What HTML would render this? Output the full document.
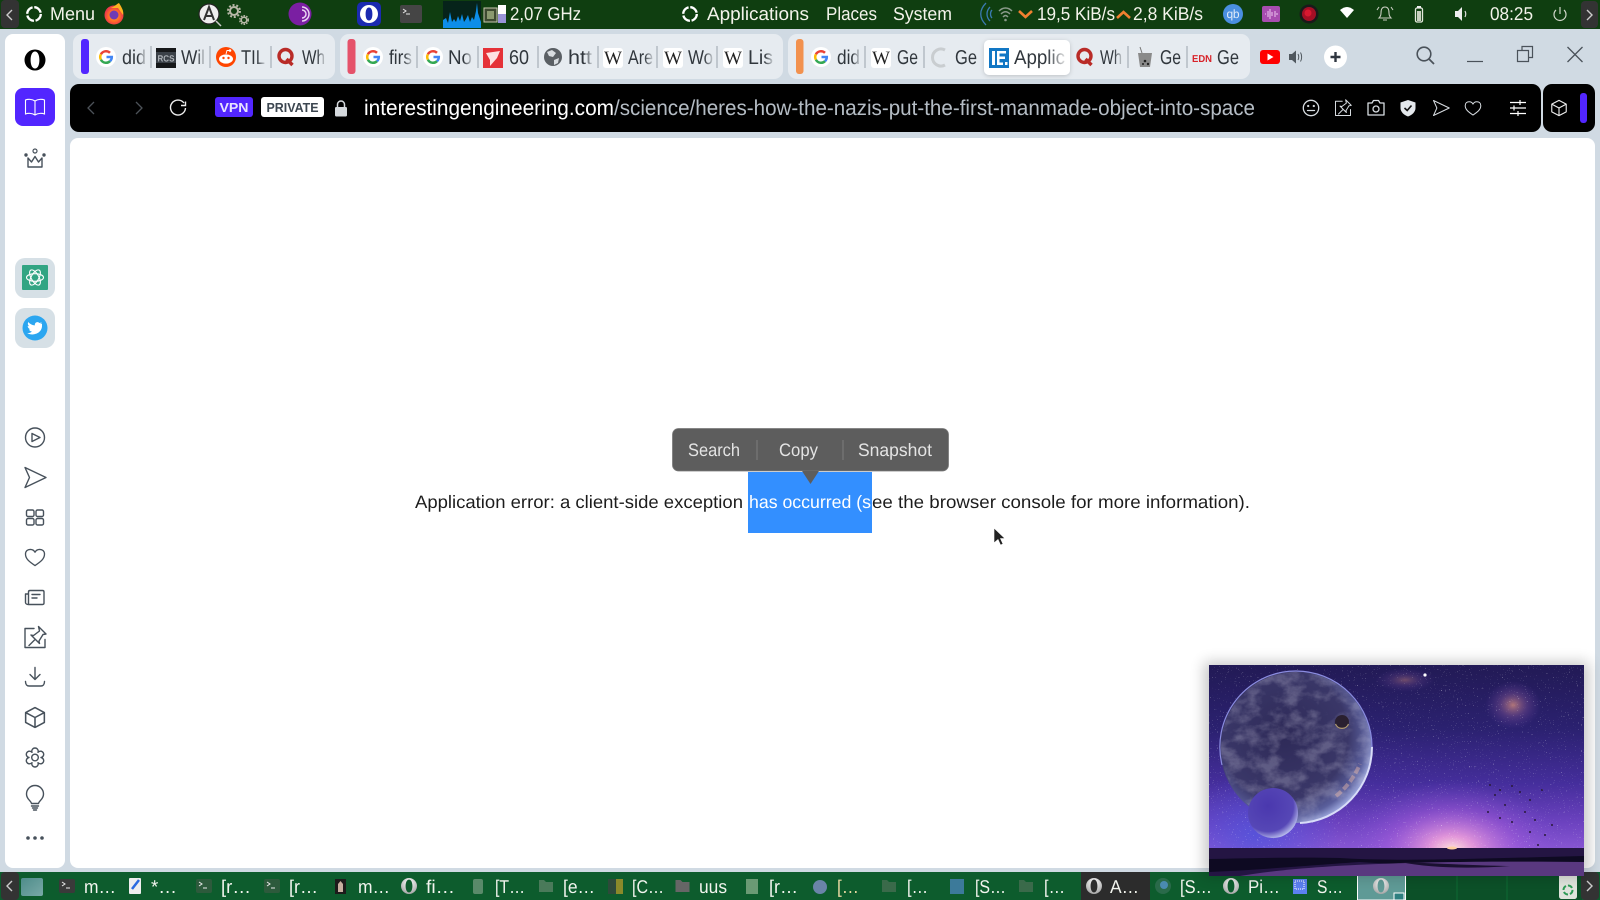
<!DOCTYPE html>
<html lang="en">
<head>
<meta charset="utf-8">
<title>Application error</title>
<style>
html,body{margin:0;padding:0;width:1600px;height:900px;overflow:hidden;background:#d0dae3}
svg{display:block;position:absolute;left:0;top:0}
text{font-family:"Liberation Sans",sans-serif;text-rendering:geometricPrecision}
.top{font-size:18.5px;fill:#f3f3ea}
.tab{font-size:20px}
.task{font-size:18.5px;fill:#f2f4ee}
.ic{fill:none;stroke:#47515b;stroke-width:1.4;stroke-linejoin:round;stroke-linecap:round}
.tb{fill:none;stroke:#d8dde2;stroke-width:1.3;stroke-linejoin:round;stroke-linecap:round}
.sep{stroke:#9aa3ab;stroke-width:1}
.ser{font-family:"Liberation Serif",serif;font-size:19px;fill:#222}
</style>
</head>
<body>
<svg width="1600" height="900" viewBox="0 0 1600 900" xmlns="http://www.w3.org/2000/svg">
<defs>
<linearGradient id="fd"><stop offset="0" stop-color="#30363c"/><stop offset=".65" stop-color="#30363c"/><stop offset="1" stop-color="#30363c" stop-opacity=".15"/></linearGradient>
<linearGradient id="sky" x1="0" y1="0" x2="0" y2="1"><stop offset="0" stop-color="#221a55"/><stop offset=".35" stop-color="#2b2170"/><stop offset=".65" stop-color="#452e9c"/><stop offset=".86" stop-color="#6c42bf"/><stop offset="1" stop-color="#8655d2"/></linearGradient>
<radialGradient id="sun" cx=".5" cy=".5" r=".5"><stop offset="0" stop-color="#ffe6dc"/><stop offset=".2" stop-color="#f3a2dc" stop-opacity=".85"/><stop offset=".6" stop-color="#b060e0" stop-opacity=".4"/><stop offset="1" stop-color="#8050d8" stop-opacity="0"/></radialGradient>
<radialGradient id="blu" cx=".5" cy=".5" r=".5"><stop offset="0" stop-color="#4a55e0" stop-opacity=".7"/><stop offset="1" stop-color="#4a55e0" stop-opacity="0"/></radialGradient>
<radialGradient id="neb" cx=".5" cy=".5" r=".5"><stop offset="0" stop-color="#c8847c" stop-opacity=".85"/><stop offset=".5" stop-color="#7a5090" stop-opacity=".45"/><stop offset="1" stop-color="#5a3a9a" stop-opacity="0"/></radialGradient>
<radialGradient id="pl" cx=".42" cy=".42" r=".62"><stop offset="0" stop-color="#2e2a58"/><stop offset=".68" stop-color="#3a3768"/><stop offset=".88" stop-color="#5a5f9c"/><stop offset="1" stop-color="#aab6ea"/></radialGradient>
<radialGradient id="mo" cx=".4" cy=".36" r=".68"><stop offset="0" stop-color="#4a38ae"/><stop offset=".75" stop-color="#5647b6"/><stop offset="1" stop-color="#c0c6f0"/></radialGradient>
<radialGradient id="ff" cx=".5" cy=".55" r=".5"><stop offset="0" stop-color="#ffb020"/><stop offset=".6" stop-color="#ff6a28"/><stop offset="1" stop-color="#e8344e"/></radialGradient>
<radialGradient id="opg" cx=".5" cy=".3" r=".8"><stop offset="0" stop-color="#fff"/><stop offset="1" stop-color="#999"/></radialGradient>
<linearGradient id="sd" x1="0" y1="0" x2="1" y2="1"><stop offset="0" stop-color="#4e8c8a"/><stop offset="1" stop-color="#79a9a7"/></linearGradient>
<clipPath id="pipc"><rect x="1209" y="665" width="375" height="211"/></clipPath>
<clipPath id="plc"><circle cx="1296" cy="747" r="75"/></clipPath>
<filter id="stars" x="0" y="0" width="100%" height="100%"><feTurbulence type="fractalNoise" baseFrequency=".75" numOctaves="2" seed="4"/><feColorMatrix values="0 0 0 0 1 0 0 0 0 1 0 0 0 0 1 0 0 0 10 -7.2"/></filter>
<filter id="cl" x="0" y="0" width="100%" height="100%"><feTurbulence type="fractalNoise" baseFrequency=".05 .07" numOctaves="5" seed="7"/><feColorMatrix values="0 0 0 0 .62 0 0 0 0 .6 0 0 0 0 .74 0 0 0 3 -1.2"/></filter>
<filter id="sh" x="-10%" y="-10%" width="120%" height="120%"><feGaussianBlur stdDeviation="7"/></filter>
<filter id="sh2" x="-10%" y="-30%" width="120%" height="170%"><feDropShadow dx="0" dy="1" stdDeviation="2" flood-color="#000" flood-opacity=".18"/></filter>

<g id="g"><circle r="10" fill="#fff"/><g fill="none" stroke-width="2.5"><path d="M4 -4.2A5.8 5.8 0 0 0 -5.1 -2.7" stroke="#ea4335"/><path d="M-5.1 -2.7A5.8 5.8 0 0 0 -5.1 2.7" stroke="#fbbc05"/><path d="M-5.1 2.7A5.8 5.8 0 0 0 4 4.2" stroke="#34a853"/><path d="M4 4.2A5.8 5.8 0 0 0 5.8 0H.5" stroke="#4285f4"/></g></g>
<g id="w"><rect x="-10" y="-10" width="20" height="20" rx="3" fill="#fff"/><text class="ser" x="0" y="6" text-anchor="middle" textLength="18" lengthAdjust="spacingAndGlyphs">W</text></g>
<g id="q"><circle r="6.5" fill="none" stroke="#b92b27" stroke-width="3.4"/><path d="M1 3L7 9" stroke="#b92b27" stroke-width="3.4"/></g>
<g id="op"><path fill="url(#opg)" fill-rule="evenodd" d="M0 -8A8 8 0 1 1 0 8A8 8 0 1 1 0 -8ZM0 -6.4C-2.2 -6.4 -3.4 -3.4 -3.4 0C-3.4 3.4 -2.2 6.4 0 6.4C2.2 6.4 3.4 3.4 3.4 0C3.4 -3.4 2.2 -6.4 0 -6.4Z"/></g>
<g id="term"><rect x="-8" y="-7" width="16" height="14" rx="2"/><path d="M-5 -4L-2 -2L-5 0M-1 2H3" fill="none" stroke="#e8e8e8" stroke-width="1"/></g>
<g id="fold"><path d="M-7 -6H-2L0 -4H7V6H-7Z"/></g>
<path id="cube" d="M0 -9L8.5 -4.5V4.5L0 9L-8.5 4.5V-4.5ZM-8.5 -4.5L0 0L8.5 -4.5M0 0V9"/>
<path id="heart" d="M0 9C-6 5 -10 2 -10 -3C-10 -6.5 -7.5 -8 -5 -8C-3 -8 -1 -7 0 -5C1 -7 3 -8 5 -8C7.5 -8 10 -6.5 10 -3C10 2 6 5 0 9Z"/>
<path id="send" d="M-10 -10L11 0L-10 10L-5.5 0Z"/>
<path id="pin" d="M-1 -9H-10V10H10V2M3.5 -11L11 -3.5L8 -3L4 3.5L4.5 6L-4 -2.5L-1.5 -2L4.5 -6.5ZM0 2L-6 8"/>
</defs>

<!-- backgrounds -->
<rect width="1600" height="900" fill="#d0dae3"/>
<rect width="1600" height="29" fill="#0f3e10"/>
<rect y="872" width="1600" height="28" fill="#0d5c2d"/>
<rect x="1407" y="872" width="175" height="28" fill="#0c5028"/>
<path d="M1457 872V900M1507 872V900" stroke="#0e6a33" stroke-width="1"/>

<!-- top panel -->
<rect x="1" y="0" width="18" height="28" rx="4" fill="#333"/>
<path d="M12 10L7 15L12 20" fill="none" stroke="#ccc" stroke-width="1.4"/>
<circle cx="34" cy="14" r="6.8" fill="none" stroke="#fff" stroke-width="2.3" stroke-dasharray="9 1.7"/>
<circle cx="114" cy="15" r="9.5" fill="url(#ff)"/><circle cx="114" cy="15" r="4.5" fill="#6e3bb5"/><path d="M108 8C112 9 118 3 119 3C122 8 124 11 123 15L118 8Z" fill="#ffb020"/>
<text class="top" x="50" y="20" textLength="45" lengthAdjust="spacingAndGlyphs">Menu</text>
<circle cx="209" cy="14" r="10" fill="#eee" stroke="#222" stroke-width="1.2"/><path d="M204 20L209 7L214 20M206 16H212" fill="none" stroke="#333" stroke-width="2"/><path d="M216 21L221 26" stroke="#ccc" stroke-width="1.5"/>
<g fill="none" stroke="#b8b8a8"><circle cx="234" cy="11" r="4" stroke-width="2"/><circle cx="234" cy="11" r="6" stroke-width="2" stroke-dasharray="2 1.8"/><circle cx="244" cy="20" r="2.8" stroke-width="1.6"/><circle cx="244" cy="20" r="4.3" stroke-width="1.4" stroke-dasharray="1.6 1.2"/></g>
<circle cx="300" cy="14" r="11.5" fill="#7a1fa2"/><path d="M302 7A7 7 0 0 1 302 21M302 10A4 4 0 0 1 302 18" fill="none" stroke="#e9d5f2" stroke-width="1.5"/>
<rect x="357" y="2" width="24" height="24" rx="5" fill="#1b2ab0"/><path fill="#fff" fill-rule="evenodd" d="M369 5A9 9 0 1 1 369 23A9 9 0 1 1 369 5ZM369 7.5C366.6 7.5 365.6 10.5 365.6 14C365.6 17.5 366.6 20.5 369 20.5C371.4 20.5 372.4 17.5 372.4 14C372.4 10.5 371.4 7.5 369 7.5Z"/>
<rect x="400" y="5" width="22" height="18" rx="2" fill="#454545"/><path d="M403 9L406 11L403 13M406 14H410" fill="none" stroke="#e8e8e8"/>
<rect x="443" y="1" width="38" height="27" fill="#06231a"/>
<path d="M443 25V20L446 18L448 23L450 12L452 22L454 19L456 22L458 16L460 21L462 14L464 22L466 19L468 15L470 22L472 17L474 20L476 11L477 3L478 13L481 22V28H443Z" fill="#0d8ee8"/>
<rect x="484" y="8" width="13" height="14" fill="#3c4a30" stroke="#c8c8b0"/><rect x="487" y="11" width="7" height="8" fill="#8a9a70"/>
<rect x="498" y="5" width="8" height="9" fill="#fff"/><rect x="498" y="14" width="8" height="9" fill="#9a94d8"/>
<text class="top" x="510" y="20" textLength="71" lengthAdjust="spacingAndGlyphs">2,07 GHz</text>
<circle cx="690" cy="14" r="6.8" fill="none" stroke="#fff" stroke-width="2.3" stroke-dasharray="9 1.7"/>
<text class="top" x="707" y="20" textLength="102" lengthAdjust="spacingAndGlyphs">Applications</text>
<text class="top" x="826" y="20" textLength="51" lengthAdjust="spacingAndGlyphs">Places</text>
<text class="top" x="893" y="20" textLength="59" lengthAdjust="spacingAndGlyphs">System</text>
<path d="M986 3C979 10 979 18 986 25M990 7C986 11 986 17 990 21M992 10C990 12 990 16 992 18" fill="none" stroke="#3a7ab0" stroke-width="1.3"/>
<path d="M999 11C1003 7 1008 7 1012 11M1001 14C1004 11 1007 11 1010 14M1003 17C1005 15 1006 15 1008 17" fill="none" stroke="#8a9a8a" stroke-width="1.5"/><circle cx="1005.5" cy="20" r="1.3" fill="#8a9a8a"/>
<path d="M1019 11L1025.5 17L1032 11" fill="none" stroke="#f08030" stroke-width="2.6"/>
<text class="top" x="1037" y="20" textLength="78" lengthAdjust="spacingAndGlyphs">19,5 KiB/s</text>
<path d="M1117 18L1123.5 12L1130 18" fill="none" stroke="#f08030" stroke-width="2.6"/>
<text class="top" x="1133" y="20" textLength="70" lengthAdjust="spacingAndGlyphs">2,8 KiB/s</text>
<circle cx="1233" cy="14" r="10" fill="#4a8fe0"/><text x="1233" y="18" text-anchor="middle" style="font-size:12px;fill:#dfeaf8" textLength="13">qb</text>
<rect x="1262" y="6" width="18" height="16" rx="2" fill="#a84db0"/><path d="M1265 14H1266M1268 11V17M1270 9V19M1272 12V16M1275 11V17M1277 13V15" stroke="#eec8f0"/>
<circle cx="1309" cy="14" r="9.5" fill="#1a1a1a"/><circle cx="1309" cy="14" r="7" fill="#a50f25"/><circle cx="1308" cy="13" r="3.5" fill="#d81830"/>
<path d="M1340 10C1345 6 1349 6 1354 10L1347 18Z" fill="#fff"/>
<path d="M1385 7C1382 7 1381 10 1381 13C1381 16 1380 17 1379 18H1391C1390 17 1389 16 1389 13C1389 10 1388 7 1385 7ZM1383 20H1387M1379 7L1377 10M1391 7L1393 10" fill="none" stroke="#c8ccc0" stroke-width="1.1"/>
<rect x="1415.500" y="8" width="7" height="14" rx="1.5" fill="#0f3e10" stroke="#e4e8dc" stroke-width="1.3"/><rect x="1417" y="11" width="4" height="10" fill="#c8d0c0"/><rect x="1417" y="6" width="4" height="2" fill="#eee"/>
<path d="M1455 11H1458L1462 7V21L1458 17H1455Z" fill="#eee"/><path d="M1465 11C1466 13 1466 15 1465 17" fill="none" stroke="#ddd" stroke-width="1.2"/>
<text class="top" x="1490" y="20" textLength="43" lengthAdjust="spacingAndGlyphs">08:25</text>
<path d="M1556 10A6 6 0 1 0 1564 10M1560 7V14" fill="none" stroke="#cfd5c8" stroke-width="1.2"/>
<rect x="1581" y="1" width="17" height="27" rx="4" fill="#333"/><path d="M1587 10L1592 15L1587 20" fill="none" stroke="#ccc" stroke-width="1.4"/>

<!-- sidebar -->
<rect x="5" y="34" width="60" height="834" rx="8" fill="#fff"/>
<path fill="#000" fill-rule="evenodd" d="M35 49.5A10.5 10.5 0 1 1 35 70.5A10.5 10.5 0 1 1 35 49.5ZM35 51.5C32 51.5 30.6 55.5 30.6 60C30.6 64.5 32 68.5 35 68.5C38 68.5 39.4 64.5 39.4 60C39.4 55.5 38 51.5 35 51.5Z"/>
<rect x="15" y="88" width="40" height="38" rx="8" fill="#5226ff"/>
<path d="M35 101C32 99 28 99 25.5 100V114C28 113 32 113 35 115C38 113 42 113 44.500 114V100C42 99 38 99 35 101ZM35 101V115" fill="none" stroke="#fff" stroke-width="1.1"/>
<path d="M28 158L31.5 162L35 156.5L38.5 162L42 158V167H28Z" fill="none" stroke="#47515b" stroke-width="1.4" stroke-linejoin="round"/><circle cx="26" cy="155" r="1.7" fill="#47515b"/><circle cx="35" cy="151" r="2" fill="none" stroke="#47515b" stroke-width="1.2"/><circle cx="44" cy="155" r="1.7" fill="#47515b"/>
<rect x="15" y="258" width="40" height="40" rx="10" fill="#d6e0e6"/>
<rect x="22" y="265" width="26" height="25" rx="1" fill="#32a583"/>
<g fill="none" stroke="#fff" stroke-width="1.1"><ellipse cx="35" cy="277.5" rx="8.500" ry="3.800"/><ellipse cx="35" cy="277.5" rx="8.500" ry="3.800" transform="rotate(60 35 277.5)"/><ellipse cx="35" cy="277.5" rx="8.500" ry="3.800" transform="rotate(120 35 277.5)"/></g>
<rect x="15" y="308" width="40" height="40" rx="10" fill="#d6e0e6"/>
<circle cx="35" cy="328" r="12.5" fill="#2ba6f0"/>
<path d="M42 323.5C41.4 323.8 40.8 324 40 324.1C40.7 323.6 41.3 323 41.6 322.2C40.9 322.6 40.2 322.9 39.4 323C37.6 321.1 34.3 322.6 34.9 325.4C32.2 325.3 29.9 324 28.3 322C27.5 323.5 27.9 325.3 29.3 326.3C28.7 326.3 28.2 326.1 27.7 325.9C27.7 327.5 28.8 328.9 30.4 329.2C29.9 329.3 29.4 329.4 28.9 329.3C29.3 330.6 30.5 331.6 32 331.6C30.6 332.7 28.9 333.2 27.2 333C32.7 336.5 42.4 333.5 42 325.3C42.1 324.7 42 324 42 323.5Z" fill="#fff"/>
<g class="ic">
<g transform="translate(35 437.500)"><circle r="9.500"/><path d="M-3 -4L5 0L-3 4Z"/></g>
<use href="#send" x="35" y="477.500"/>
<g transform="translate(35 517.500)"><rect x="-8.500" y="-7.500" width="7.500" height="6.500" rx="1.500"/><rect x="1" y="-7.500" width="7.500" height="6.500" rx="1.500"/><rect x="-8.500" y="1" width="7.500" height="6.500" rx="1.500"/><rect x="1" y="1" width="7.500" height="6.500" rx="1.500"/></g>
<use href="#heart" transform="translate(35 557) scale(.95)"/>
<g transform="translate(35 597.500)"><path d="M-6.500 7H7.500C8.500 7 9 6.500 9 5.500V-5.500C9 -6.500 8.500 -7 7.500 -7H-5C-6 -7 -6.500 -6.500 -6.500 -5.500V7C-8.500 7 -9.500 6 -9.500 5V-3.500H-6.500M-3 -3H5M-3 0.500H2"/></g>
<use href="#pin" x="35" y="637.500"/>
<g transform="translate(35 676.500)"><path d="M0 -9V3M-5 -2L0 3L5 -2M-9.500 5C-9.500 8 -8 9.500 -6 9.500H6C8 9.500 9.500 8 9.500 5"/></g>
<use href="#cube" transform="translate(35 717.500) scale(1.1)"/>
<g transform="translate(35 757.500)"><circle r="3.300"/><path transform="rotate(30)" d="M5.200 -3A3.200 3.200 0 1 1 5.200 3A3.200 3.200 0 1 1 0 6A3.200 3.200 0 1 1 -5.200 3A3.200 3.200 0 1 1 -5.200 -3A3.200 3.200 0 1 1 0 -6A3.200 3.200 0 1 1 5.200 -3Z"/></g>
<g transform="translate(35 798.500)"><path d="M-3.500 5C-4 2 -8.500 1 -8.500 -4.500A8.500 8.500 0 0 1 8.500 -4.500C8.500 1 4 2 3.500 5ZM-3.500 7.500H3.500M-2.500 9.500H2.500M-1.500 11.500H1.500"/></g>
</g>
<circle cx="28" cy="838" r="1.8" fill="#47515b"/><circle cx="35" cy="838" r="1.8" fill="#47515b"/><circle cx="42" cy="838" r="1.8" fill="#47515b"/>

<!-- tab groups -->
<rect x="73" y="34" width="262" height="45" rx="9" fill="#e6ebf0"/>
<rect x="340" y="34" width="443" height="45" rx="9" fill="#e6ebf0"/>
<rect x="788" y="34" width="462" height="45" rx="9" fill="#e6ebf0"/>
<rect x="81" y="39" width="8" height="35" rx="3" fill="#5226ff"/>
<rect x="347.5" y="39" width="8" height="35" rx="3" fill="#e5526a"/>
<rect x="796" y="39" width="7.5" height="35" rx="3" fill="#f2914e"/>
<path class="sep" d="M151 46V68M210 46V68M271 46V68M417 46V68M478 46V68M538 46V68M598 46V68M657 46V68M717 46V68M865 46V68M924 46V68M1128 46V68M1187 46V68"/>

<use href="#g" x="106" y="57"/>
<text class="tab" x="122" y="64" textLength="24" lengthAdjust="spacingAndGlyphs" fill="url(#fd)">did</text>
<rect x="156" y="48" width="20" height="20" fill="#16181a"/><rect x="156" y="52" width="20" height="11" fill="#3b4148"/><text x="166" y="61.5" text-anchor="middle" style="font-size:9px;font-weight:bold;fill:#aeb3b8" textLength="17" lengthAdjust="spacingAndGlyphs">RCS</text>
<text class="tab" x="181" y="64" textLength="24" lengthAdjust="spacingAndGlyphs" fill="url(#fd)">Wil</text>
<circle cx="226" cy="57" r="10" fill="#ff4500"/><ellipse cx="226" cy="59" rx="7" ry="4.6" fill="#fff"/><circle cx="223.5" cy="58" r="1.2" fill="#ff4500"/><circle cx="228.5" cy="58" r="1.2" fill="#ff4500"/><circle cx="230" cy="50.5" r="1.3" fill="#fff"/><path d="M226 54L227 50.5H230" stroke="#fff" fill="none" stroke-width=".9"/>
<text class="tab" x="241" y="64" textLength="24" lengthAdjust="spacingAndGlyphs" fill="url(#fd)">TIL</text>
<use href="#q" x="285.5" y="56"/>
<text class="tab" x="302" y="64" textLength="23" lengthAdjust="spacingAndGlyphs" fill="url(#fd)">Wh</text>

<use href="#g" x="373" y="57"/>
<text class="tab" x="389" y="64" textLength="23" lengthAdjust="spacingAndGlyphs" fill="url(#fd)">firs</text>
<use href="#g" x="433" y="57"/>
<text class="tab" x="448" y="64" textLength="24" lengthAdjust="spacingAndGlyphs" fill="url(#fd)">No</text>
<rect x="483" y="48" width="20" height="20" fill="#e53238"/><path d="M486 53L500 51L497 58L490 66L490 60Z" fill="#fde2e2"/>
<text class="tab" x="509" y="64" textLength="20" lengthAdjust="spacingAndGlyphs" fill="#30363c">60</text>
<circle cx="553" cy="57" r="9" fill="#5a5f64"/><path d="M547 52L552 50L556 53L553 57L549 56ZM554 60L559 58L558 63L554 65Z" fill="#d8dce0"/>
<text class="tab" x="568" y="64" textLength="24" lengthAdjust="spacingAndGlyphs" fill="url(#fd)">htt</text>
<use href="#w" x="613" y="58"/>
<text class="tab" x="628" y="64" textLength="25" lengthAdjust="spacingAndGlyphs" fill="url(#fd)">Are</text>
<use href="#w" x="673" y="58"/>
<text class="tab" x="688" y="64" textLength="25" lengthAdjust="spacingAndGlyphs" fill="url(#fd)">Wo</text>
<use href="#w" x="733" y="58"/>
<text class="tab" x="748" y="64" textLength="25" lengthAdjust="spacingAndGlyphs" fill="url(#fd)">Lis</text>

<use href="#g" x="821" y="57"/>
<text class="tab" x="837" y="64" textLength="23" lengthAdjust="spacingAndGlyphs" fill="url(#fd)">did</text>
<use href="#w" x="881" y="58"/>
<text class="tab" x="897" y="64" textLength="21" lengthAdjust="spacingAndGlyphs" fill="#30363c">Ge</text>
<path d="M945 50A8.5 8.5 0 1 0 945 65" fill="none" stroke="#c9cdd0" stroke-width="3"/>
<text class="tab" x="955" y="64" textLength="22" lengthAdjust="spacingAndGlyphs" fill="#30363c">Ge</text>
<rect x="984" y="40" width="86" height="35" rx="5" fill="#fff" filter="url(#sh2)"/>
<rect x="989" y="48" width="20" height="20" fill="#1277c4"/>
<path d="M992 51H995V65H992ZM997 51H1006V53.5H999.5V56.5H1005V59H999.5V62.5H1003V65H997ZM1005 62H1007.5V65H1005Z" fill="#fff"/>
<text class="tab" x="1014" y="64" textLength="51" lengthAdjust="spacingAndGlyphs" fill="url(#fd)">Applic</text>
<use href="#q" x="1084.5" y="56"/>
<text class="tab" x="1100" y="64" textLength="22" lengthAdjust="spacingAndGlyphs" fill="url(#fd)">Wh</text>
<path d="M1138 53H1152L1150 67H1140Z" fill="#8a8a8a"/><path d="M1140 47L1142 53" stroke="#777"/><circle cx="1145" cy="61" r="1.3" fill="#222"/><circle cx="1148" cy="64" r="1.2" fill="#222"/><circle cx="1143" cy="64" r="1" fill="#222"/>
<text class="tab" x="1160" y="64" textLength="21" lengthAdjust="spacingAndGlyphs" fill="#30363c">Ge</text>
<text x="1192" y="62" style="font-size:10px;font-weight:bold;fill:#d8232a" textLength="20" lengthAdjust="spacingAndGlyphs">EDN</text>
<text class="tab" x="1217" y="64" textLength="22" lengthAdjust="spacingAndGlyphs" fill="#30363c">Ge</text>

<rect x="1260" y="50" width="20" height="14" rx="3" fill="#f00"/><path d="M1267.5 53.5L1273.5 57L1267.5 60.5Z" fill="#fff"/>
<path d="M1289 54H1292L1296 50.5V63.5L1292 60H1289Z" fill="#50585f"/><path d="M1298 54C1299 56 1299 58 1298 60M1300.5 52.5C1302 55 1302 59 1300.5 61.5" fill="none" stroke="#50585f"/>
<circle cx="1335.500" cy="57" r="11.5" fill="#fff"/><path d="M1330.500 57H1340.500M1335.500 52V62" stroke="#2f3640" stroke-width="2.4"/>
<circle cx="1424" cy="54" r="6.8" fill="none" stroke="#4a525a" stroke-width="1.6"/><path d="M1429 59L1434 64" stroke="#4a525a" stroke-width="1.8"/>
<path d="M1467 61.5H1483" stroke="#4a525a" stroke-width="1.2"/>
<path d="M1517.5 50.5H1528.5V61.5H1517.5ZM1522 50.5V46.5H1532.5V57.5H1528.5" fill="none" stroke="#4a525a" stroke-width="1.2"/>
<path d="M1567.5 47L1582.5 62M1582.5 47L1567.5 62" stroke="#4a525a" stroke-width="1.3"/>

<!-- toolbar -->
<rect x="70" y="84" width="1471" height="48" rx="9" fill="#000"/>
<rect x="1543" y="84" width="52" height="48" rx="9" fill="#000"/>
<path d="M94 102L88 108L94 114" fill="none" stroke="#4c5258" stroke-width="1.3"/>
<path d="M136 102L142 108L136 114" fill="none" stroke="#4c5258" stroke-width="1.3"/>
<path d="M184 103A7.5 7.5 0 1 0 185.5 108M185.5 101.5V105.5H181" fill="none" stroke="#eee" stroke-width="1.4"/>
<rect x="215" y="97" width="38" height="20" rx="3" fill="#5226ff"/><text x="234" y="112" text-anchor="middle" style="font-size:13px;font-weight:bold;fill:#e8e4ff" textLength="29" lengthAdjust="spacingAndGlyphs">VPN</text>
<rect x="261" y="97" width="63" height="20" rx="3" fill="#fff"/><text x="292.5" y="112" text-anchor="middle" style="font-size:13px;font-weight:bold;fill:#3c4650" textLength="52" lengthAdjust="spacingAndGlyphs">PRIVATE</text>
<rect x="335" y="107" width="12" height="9.5" rx="1.2" fill="#d5d9dd"/><path d="M337.5 107V104.5A3.5 3.5 0 0 1 344.5 104.5V107" fill="none" stroke="#d5d9dd" stroke-width="1.5"/>
<text x="364" y="115" style="font-size:21.500px;fill:#fff" textLength="250" lengthAdjust="spacingAndGlyphs">interestingengineering.com</text>
<text x="614" y="115" style="font-size:21.500px;fill:#b4bcc4" textLength="641" lengthAdjust="spacingAndGlyphs">/science/heres-how-the-nazis-put-the-first-manmade-object-into-space</text>
<g class="tb">
<g transform="translate(1311 108)"><circle r="7.7"/><path d="M-3.5 2.5H3.5"/><circle cx="-2.8" cy="-2" r=".5"/><circle cx="2.8" cy="-2" r=".5"/></g>
<use href="#pin" transform="translate(1343 108) scale(.75)"/>
<g transform="translate(1376 108)"><path d="M-8 -5H-4L-2.5 -7.5H2.5L4 -5H8V7H-8Z"/><circle cy="1" r="3"/></g>
<use href="#send" transform="translate(1441 108) scale(.75)"/>
<use href="#heart" transform="translate(1473 108) scale(.78)"/>
<g transform="translate(1559 108)"><use href="#cube" transform="scale(.85)" stroke="#eee"/></g>
</g>
<path d="M1408 100L1415.5 102.5V108C1415.5 112 1412 115 1408 116.5C1404 115 1400.5 112 1400.5 108V102.5Z" fill="#e4e8ec"/><path d="M1404.5 108L1407.2 110.5L1411.5 105.5" fill="none" stroke="#111" stroke-width="1.6"/>
<path d="M1510 102.5H1526M1510 108H1526M1510 113.5H1526M1520 100V105M1514 105.5V110.5M1518 111V116" stroke="#fff" stroke-width="1.2" fill="none"/>
<rect x="1580" y="93" width="7" height="30" rx="3" fill="#5226ff"/>

<!-- page -->
<rect x="70" y="138" width="1525" height="730" rx="8" fill="#fff"/>
<rect x="748" y="472" width="124" height="61" fill="#338fff"/>
<text x="415" y="508" style="font-size:18px;fill:#1c1c1c" textLength="328" lengthAdjust="spacingAndGlyphs">Application error: a client-side exception</text>
<text x="749" y="508" style="font-size:18px;fill:#fff" textLength="122" lengthAdjust="spacingAndGlyphs">has occurred (s</text>
<text x="872" y="508" style="font-size:18px;fill:#1c1c1c" textLength="378" lengthAdjust="spacingAndGlyphs">ee the browser console for more information).</text>
<rect x="672.500" y="428.500" width="276" height="42.500" rx="6" fill="#5d5d5d" stroke="#7a7a7a" stroke-width=".8"/>
<path d="M802 471H819L810.500 484Z" fill="#5d5d5d"/>
<path d="M757 440V460M843 440V460" stroke="#7d7d7d"/>
<text x="688" y="456" style="font-size:18px;fill:#e4e4e4" textLength="52" lengthAdjust="spacingAndGlyphs">Search</text>
<text x="779" y="456" style="font-size:18px;fill:#e4e4e4" textLength="39" lengthAdjust="spacingAndGlyphs">Copy</text>
<text x="858" y="456" style="font-size:18px;fill:#e4e4e4" textLength="74" lengthAdjust="spacingAndGlyphs">Snapshot</text>
<path d="M994 528V543L998 539.500L1000.500 545L1003 544L1000.500 538.500H1005Z" fill="#222" stroke="#fff" stroke-width=".6"/>

<!-- taskbar -->
<rect x="1" y="872" width="18" height="28" rx="4" fill="#333"/><path d="M12 881L7 886L12 891" fill="none" stroke="#ccc" stroke-width="1.4"/>
<rect x="21" y="878" width="22" height="18" rx="2" fill="url(#sd)"/>
<use href="#term" x="67" y="886" fill="#3a3a3a"/>
<text class="task" x="84" y="893" textLength="32" lengthAdjust="spacingAndGlyphs">m…</text>
<rect x="129" y="878" width="12" height="16" rx="1" fill="#eee"/><path d="M132 889L139 880" stroke="#2a6ae0" stroke-width="2.500"/>
<text class="task" x="151" y="893" textLength="26" lengthAdjust="spacingAndGlyphs">*…</text>
<use href="#term" x="204" y="886" fill="#2d5a3c"/>
<text class="task" x="221" y="893" textLength="30" lengthAdjust="spacingAndGlyphs">[r…</text>
<use href="#term" x="272" y="886" fill="#2d5a3c"/>
<text class="task" x="289" y="893" textLength="29" lengthAdjust="spacingAndGlyphs">[r…</text>
<rect x="335" y="879" width="11" height="15" fill="#1d1b1b"/><path d="M338 892V884L340.500 881L343 884V892Z" fill="#c8b0a0"/>
<text class="task" x="358" y="893" textLength="32" lengthAdjust="spacingAndGlyphs">m…</text>
<use href="#op" x="409" y="886"/>
<text class="task" x="426" y="893" textLength="29" lengthAdjust="spacingAndGlyphs">fi…</text>
<rect x="473" y="879" width="10" height="15" rx="2" fill="#5a8a6a"/>
<text class="task" x="495" y="893" textLength="30" lengthAdjust="spacingAndGlyphs">[T…</text>
<use href="#fold" x="546" y="886" fill="#4a7a5a"/>
<text class="task" x="563" y="893" textLength="32" lengthAdjust="spacingAndGlyphs">[e…</text>
<rect x="608" y="879" width="8" height="15" fill="#2d4a3a"/><rect x="616" y="879" width="7" height="15" fill="#8a8a2a"/>
<text class="task" x="632" y="893" textLength="32" lengthAdjust="spacingAndGlyphs">[C…</text>
<use href="#fold" x="682.500" y="886" fill="#666"/>
<text class="task" x="699" y="893" textLength="28" lengthAdjust="spacingAndGlyphs">uus</text>
<rect x="746" y="879" width="12" height="15" fill="#6a9a74"/>
<text class="task" x="769" y="893" textLength="29" lengthAdjust="spacingAndGlyphs">[r…</text>
<circle cx="820" cy="887" r="7" fill="#6a84a8"/>
<text class="task" x="837" y="893" textLength="22" lengthAdjust="spacingAndGlyphs" style="fill:#e8d8a0">[…</text>
<use href="#fold" x="889" y="886" fill="#3a6a4a"/>
<text class="task" x="907" y="893" textLength="21" lengthAdjust="spacingAndGlyphs">[…</text>
<rect x="950" y="879" width="14" height="15" fill="#3c7a9a"/>
<text class="task" x="975" y="893" textLength="31" lengthAdjust="spacingAndGlyphs">[S…</text>
<use href="#fold" x="1026" y="886" fill="#3a6a4a"/>
<text class="task" x="1044" y="893" textLength="21" lengthAdjust="spacingAndGlyphs">[…</text>
<rect x="1081" y="872" width="69" height="28" fill="#2c2c2c"/>
<use href="#op" x="1094" y="886"/>
<text class="task" x="1110" y="893" textLength="29" lengthAdjust="spacingAndGlyphs">A…</text>
<circle cx="1163" cy="886" r="8" fill="#2a6a4a"/><circle cx="1164" cy="885" r="4" fill="#4a8ab0"/>
<text class="task" x="1180" y="893" textLength="32" lengthAdjust="spacingAndGlyphs">[S…</text>
<use href="#op" x="1231" y="886"/>
<text class="task" x="1248" y="893" textLength="32" lengthAdjust="spacingAndGlyphs">Pi…</text>
<rect x="1293" y="879" width="14" height="15" fill="#5c80f0"/><rect x="1295" y="881" width="9" height="8" fill="none" stroke="#fff" stroke-dasharray="1 1"/>
<text class="task" x="1317" y="893" textLength="26" lengthAdjust="spacingAndGlyphs">S…</text>
<rect x="1357.500" y="875" width="48" height="25" fill="#5f9a96" stroke="#fff"/>
<use href="#op" x="1381" y="886"/>
<rect x="1394" y="893" width="10" height="7" fill="#2e7f80" stroke="#fff"/>
<path d="M1559 876H1577V896C1577 898 1576 899 1574 899H1562C1560 899 1559 898 1559 896Z" fill="#dfe3dc"/><path d="M1562 874H1574" stroke="#eee" stroke-width="2"/><circle cx="1568" cy="890" r="4.500" fill="none" stroke="#2d9a55" stroke-width="2" stroke-dasharray="5 2"/>
<rect x="1581" y="872" width="18" height="28" rx="4" fill="#333"/><path d="M1587 881L1592 886L1587 891" fill="none" stroke="#ccc" stroke-width="1.4"/>

<!-- picture in picture -->
<rect x="1204" y="662" width="385" height="214" fill="#000" opacity=".22" filter="url(#sh)"/>
<g clip-path="url(#pipc)">
<rect x="1209" y="665" width="375" height="183" fill="url(#sky)"/>
<ellipse cx="1255" cy="835" rx="85" ry="60" fill="url(#blu)"/>
<ellipse cx="1452" cy="850" rx="110" ry="70" fill="url(#sun)"/>
<ellipse cx="1513" cy="705" rx="28" ry="24" fill="url(#neb)"/>
<ellipse cx="1405" cy="680" rx="30" ry="12" fill="url(#neb)" opacity=".55"/>
<rect x="1209" y="665" width="375" height="183" filter="url(#stars)" opacity=".5"/>
<circle cx="1425" cy="675" r="1.600" fill="#fff"/>
<circle cx="1296" cy="747" r="76" fill="url(#pl)"/>
<g clip-path="url(#plc)"><rect x="1220" y="671" width="152" height="152" filter="url(#cl)" opacity=".28"/><path d="M1336 796C1346 788 1354 778 1360 764" fill="none" stroke="#e8b8a8" stroke-width="4" opacity=".45" stroke-dasharray="7 3"/></g>
<path d="M1222 765A76 76 0 0 1 1296 671A76 76 0 0 1 1372 747" fill="none" stroke="#8a8ce0" stroke-width="1.200"/>
<path d="M1372 747A76 76 0 0 1 1300 823" fill="none" stroke="#d8dcf8" stroke-width="2"/>
<circle cx="1342" cy="722" r="7" fill="#2a2030"/><path d="M1335.500 724A7 7 0 0 0 1348.500 724" fill="none" stroke="#b09a70" stroke-width="1.200"/>
<circle cx="1273" cy="813" r="25" fill="url(#mo)"/>
<g fill="#2a1a3a"><circle cx="1490" cy="785" r="1"/><circle cx="1500" cy="790" r="1"/><circle cx="1512" cy="786" r="1"/><circle cx="1495" cy="795" r="1"/><circle cx="1520" cy="792" r="1"/><circle cx="1530" cy="800" r="1"/><circle cx="1505" cy="805" r="1"/><circle cx="1488" cy="812" r="1"/><circle cx="1525" cy="812" r="1"/><circle cx="1542" cy="790" r="1"/><circle cx="1535" cy="820" r="1"/><circle cx="1512" cy="822" r="1"/><circle cx="1500" cy="818" r="1"/><circle cx="1530" cy="832" r="1"/><circle cx="1545" cy="835" r="1"/><circle cx="1538" cy="845" r="1"/><circle cx="1552" cy="825" r="1"/></g>
<rect x="1209" y="848" width="375" height="28" fill="#241543"/>
<path d="M1209 859C1260 858 1300 857 1340 858C1400 862 1500 858 1584 856V862C1500 866 1420 866 1360 862C1300 866 1260 870 1209 872Z" fill="#0e0a22"/>
<path d="M1240 876C1300 866 1400 860 1584 862V876Z" fill="#59387f"/>
<path d="M1400 862C1450 864 1490 866 1510 866C1470 869 1430 868 1400 862Z" fill="#1a1030"/>
<ellipse cx="1452" cy="848" rx="5" ry="1.500" fill="#ffd0a0"/>
</g>
</svg>
</body>
</html>
